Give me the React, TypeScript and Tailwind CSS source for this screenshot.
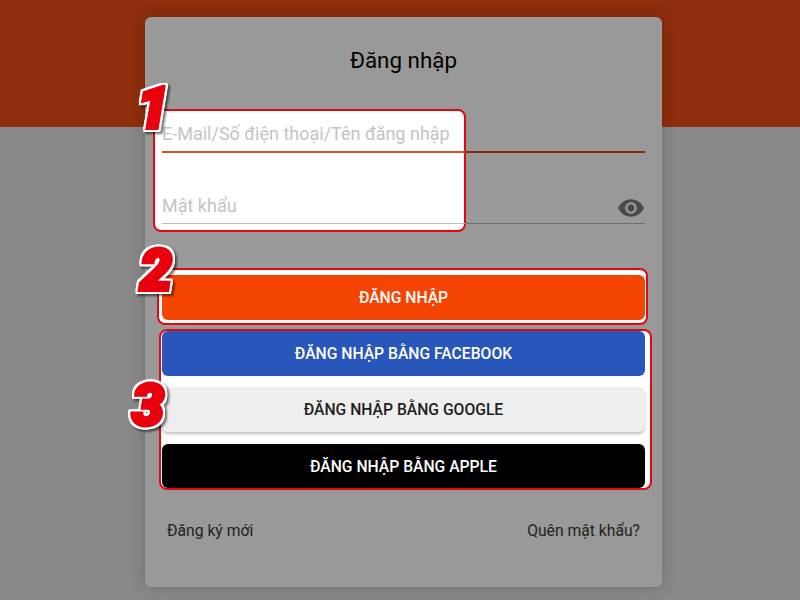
import React from 'react';

const fontRoboto = "font-['Roboto','Liberation_Sans',sans-serif]";

const StepNumber = ({ value, className }: { value: string; className: string }) => (
  <span
    className={`absolute z-20 text-[57px] leading-none font-black italic text-[#e8000c] [-webkit-text-stroke:4px_#e8000c] [filter:drop-shadow(2px_0_0_#fff)_drop-shadow(-2px_0_0_#fff)_drop-shadow(0_2px_0_#fff)_drop-shadow(0_-2px_0_#fff)_drop-shadow(2px_2px_1px_rgba(0,0,0,0.55))] ${className}`}
  >
    {value}
  </span>
);

export default function App() {
  return (
    <div className={`h-[600px] w-[800px] overflow-hidden bg-[#888888] ${fontRoboto}`}>
      <div className="h-[127px] bg-[#8e2e0c]" />

      {/* Card */}
      <div className="-mt-[110px] ml-[145px] h-[570px] w-[517px] rounded-md bg-[#999999] px-[17px] pt-[27px] shadow-[0_0_16px_rgba(0,0,0,0.18)]">
        <h1 className="text-center text-[22.4px] leading-8 text-black">Đăng nhập</h1>

        {/* Fields */}
        <div className="relative mt-[34px]">
          <div className="absolute -top-px left-[-9px] h-[123px] w-[313px] rounded-lg border-2 border-[#e30613] bg-white" />
          <StepNumber value="1" className="-top-[30px] left-[-25px]" />

          <div className="relative h-[43px] pt-[10px]">
            <div className="h-[31px] text-lg leading-[28px] text-[#c4c4c4]">E-Mail/Số điện thoại/Tên đăng nhập</div>
            <div className="flex h-0.5">
              <div className="w-[303px] bg-[#d0562a]" />
              <div className="flex-1 bg-[#7f2a0c]" />
            </div>
          </div>

          <div className="relative mt-[29px] h-[43px] pt-[10px]">
            <div className="flex h-[31px] items-center justify-between">
              <span className="pb-1 text-lg leading-[30px] text-[#c4c4c4]">Mật khẩu</span>
              <svg viewBox="0 0 24 24" className="h-7 w-7 fill-[#4a4a4a]">
                <path d="M12 4.5C7 4.5 2.73 7.61 1 12c1.73 4.39 6 7.5 11 7.5s9.27-3.11 11-7.5c-1.73-4.39-6-7.5-11-7.5zM12 17c-2.76 0-5-2.24-5-5s2.24-5 5-5 5 2.24 5 5-2.24 5-5 5zm0-8c-1.66 0-3 1.34-3 3s1.34 3 3 3 3-1.34 3-3-1.34-3-3-3z" />
              </svg>
            </div>
            <div className="flex h-px">
              <div className="w-[303px] bg-[#bdbdbd]" />
              <div className="flex-1 bg-[#6e6e6e]" />
            </div>
          </div>
        </div>

        {/* Login button */}
        <div className="relative mt-[50px]">
          <div className="absolute -top-[7px] -right-[3px] -bottom-[5px] -left-[5px] rounded-lg border-2 border-[#e30613] bg-white" />
          <StepNumber value="2" className="-top-[33px] left-[-22px]" />
          <button className="relative flex h-[45px] w-full items-center justify-center rounded-md bg-[#f44503] text-[15.7px] font-medium text-white">
            ĐĂNG NHẬP
          </button>
        </div>

        {/* Social buttons */}
        <div className="relative mt-[11px]">
          <div className="absolute -top-[2px] -right-[7px] -bottom-[2px] -left-[3px] rounded-lg border-2 border-[#e30613] bg-white" />
          <StepNumber value="3" className="top-[46px] left-[-30px]" />
          <div className="relative flex flex-col">
            <button className="flex h-[45px] items-center justify-center rounded-md bg-[#2856ba] text-[15.7px] font-medium text-white">
              ĐĂNG NHẬP BẰNG FACEBOOK
            </button>
            <button className="mt-[11px] flex h-[45px] items-center justify-center rounded-md bg-[#eeeeee] text-[15.7px] font-medium text-[#212121] shadow-[0_2px_3px_rgba(0,0,0,0.25)]">
              ĐĂNG NHẬP BẰNG GOOGLE
            </button>
            <button className="mt-[12px] flex h-[44px] items-center justify-center rounded-md bg-black pt-px text-[15.7px] font-medium text-white">
              ĐĂNG NHẬP BẰNG APPLE
            </button>
          </div>
        </div>

        {/* Links */}
        <div className="mt-[31px] flex justify-between px-[5px] text-[15.7px] leading-6 text-[#222222]">
          <span>Đăng ký mới</span>
          <span>Quên mật khẩu?</span>
        </div>
      </div>
    </div>
  );
}
